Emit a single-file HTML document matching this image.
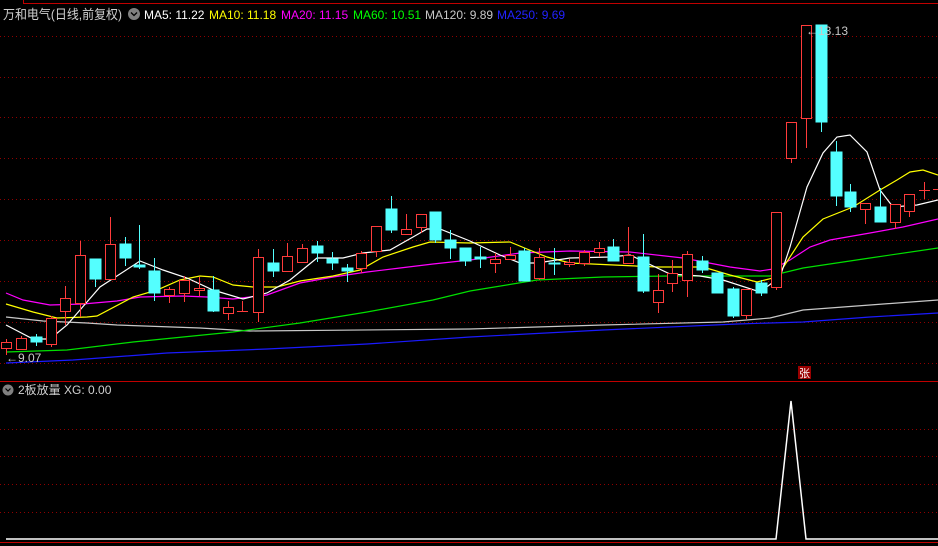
<!DOCTYPE html>
<html><head><meta charset="utf-8"><style>
html,body{margin:0;padding:0;background:#000;width:938px;height:546px;overflow:hidden}
svg{display:block}
text{font-family:"Liberation Sans","Noto Sans CJK SC",sans-serif}
</style></head><body>
<svg width="938" height="546" viewBox="0 0 938 546" xmlns="http://www.w3.org/2000/svg">
<rect width="938" height="546" fill="#000"/>
<path d="M23 3.5H938M23.5 0V3" stroke="#c00000" stroke-width="1"/>
<g stroke="#900000" stroke-width="1" stroke-dasharray="1,3">
<path d="M0 36.5H938M0 77.5H938M0 117.5H938M0 158.5H938M0 199.5H938M0 240.5H938M0 281.5H938M0 322.5H938M0 363.5H938"/>
<path d="M0 429.5H938M0 456.5H938M0 484.5H938M0 512.5H938"/>
</g>
<path d="M0 381.5H938M0 542.5H938" stroke="#c00000"/>
<text x="3" y="19" font-size="13" fill="#d0d0d0" textLength="119" lengthAdjust="spacingAndGlyphs">万和电气(日线,前复权)</text>
<circle cx="134" cy="14" r="6" fill="#808080"/><path d="M131 12.5l3 3 3-3" stroke="#000" fill="none" stroke-width="1.3"/>
<g font-size="12">
<text x="144" y="19" fill="#fff">MA5: 11.22</text>
<text x="209" y="19" fill="#ff0">MA10: 11.18</text>
<text x="281" y="19" fill="#f0f">MA20: 11.15</text>
<text x="353" y="19" fill="#0f0">MA60: 10.51</text>
<text x="425" y="19" fill="#c8c8c8">MA120: 9.89</text>
<text x="497" y="19" fill="#22f">MA250: 9.69</text>
</g>
<g fill="none" stroke-width="1.2">
<polyline stroke="#1a1aff" points="6,363 73,360 167,353 267,349 367,344 470,337 603,330 737,324 803,322 870,317 938,313"/>
<polyline stroke="#c8c8c8" points="6,317 43,321 87,323 117,325 200,328 250,331 470,329 603,325 723,322 770,318 803,310 870,305 938,300"/>
<polyline stroke="#00e000" points="6,352 67,350 133,342 233,332 300,323 367,312 433,300 470,291 537,280 603,277 670,276 770,276 803,268 870,258 938,248"/>
<polyline stroke="#ff00ff" points="6,293 23,300 50,305 83,304 117,301 140,297 183,296 207,297 233,299 267,295 300,283 333,277 367,272 400,268 433,264 470,260 520,253 570,251 630,252 683,258 730,267 760,271 773,269 790,260 810,247 830,240 870,233 903,227 938,219"/>
<polyline stroke="#ffff00" points="6,304 33,312 57,318 87,317 97,316 133,297 157,290 180,280 200,276 213,277 233,285 253,287 277,287 300,281 333,276 360,270 383,257 413,247 430,242 470,243 510,242 527,249 547,257 570,263 657,267 703,267 730,275 757,282 777,277 803,237 823,219 853,207 880,190 897,180 910,172 923,170 938,175"/>
<polyline stroke="#ffffff" points="6,325 33,339 50,339 67,325 100,287 140,261 163,270 187,278 213,290 243,299 267,293 290,280 317,258 343,258 363,253 390,250 413,237 427,229 440,229 470,241 500,255 520,263 537,263 570,258 610,257 630,255 670,274 700,276 723,280 760,292 780,277 790,247 807,187 823,153 837,137 850,135 867,152 880,190 893,207 917,205 938,200"/>
</g>
<g stroke="#ff3b3b" stroke-width="1" fill="#000">
<path d="M6.5 339V355M21.5 336V349M51.5 316V347M65.5 286V325M80.5 241V317M110.5 217V279M169.5 287V303M184.5 276V302M199.5 277V296M228.5 301V320M242.5 301V311M258.5 249V322M287.5 243V271M302.5 244V262M361.5 251V273M376.5 226V257M406.5 214V235M421.5 214V233M495.5 253V273M510.5 247V260M539.5 248V280M569.5 259V267M584.5 250V266M599.5 242V257M628.5 227V263M658.5 274V313M672.5 260V292M687.5 251V297M746.5 289V319M776.5 212V290M791.5 122V163M806.5 25V148M865.5 203V224M895.5 204V229M909.5 194V217M924.5 182V199"/>
<rect x="1.5" y="342.5" width="10" height="6"/>
<rect x="16.5" y="338.5" width="10" height="11"/>
<rect x="46.5" y="318.5" width="10" height="26"/>
<rect x="60.5" y="298.5" width="10" height="13"/>
<rect x="75.5" y="255.5" width="10" height="48"/>
<rect x="105.5" y="244.5" width="10" height="35"/>
<rect x="164.5" y="289.5" width="10" height="6"/>
<rect x="179.5" y="280.5" width="10" height="13"/>
<rect x="194.5" y="288.5" width="10" height="2"/>
<rect x="223.5" y="307.5" width="10" height="6"/>
<path d="M237 311.5H248"/>
<rect x="253.5" y="257.5" width="10" height="55"/>
<rect x="282.5" y="256.5" width="10" height="15"/>
<rect x="297.5" y="248.5" width="10" height="14"/>
<rect x="356.5" y="253.5" width="10" height="15"/>
<rect x="371.5" y="226.5" width="10" height="25"/>
<rect x="401.5" y="229.5" width="10" height="5"/>
<rect x="416.5" y="214.5" width="10" height="13"/>
<rect x="490.5" y="259.5" width="10" height="4"/>
<rect x="505.5" y="255.5" width="10" height="4"/>
<rect x="534.5" y="257.5" width="10" height="21"/>
<rect x="564.5" y="262.5" width="10" height="2"/>
<rect x="579.5" y="252.5" width="10" height="11"/>
<rect x="594.5" y="248.5" width="10" height="4"/>
<rect x="623.5" y="255.5" width="10" height="8"/>
<rect x="653.5" y="290.5" width="10" height="12"/>
<rect x="667.5" y="273.5" width="10" height="10"/>
<rect x="682.5" y="254.5" width="10" height="26"/>
<rect x="741.5" y="289.5" width="10" height="26"/>
<rect x="771.5" y="212.5" width="10" height="75"/>
<rect x="786.5" y="122.5" width="10" height="36"/>
<rect x="801.5" y="25.5" width="10" height="93"/>
<rect x="860.5" y="203.5" width="10" height="6"/>
<rect x="890.5" y="204.5" width="10" height="18"/>
<rect x="904.5" y="194.5" width="10" height="17"/>
<path d="M919 190.5H930M933 189.5H938"/>
</g>
<g stroke="#54ffff" fill="#54ffff">
<path d="M36.5 334V346M95.5 259V287M125.5 237V266M139.5 225V269M154.5 258V301M213.5 276V312M273.5 249V277M317.5 241V262M332.5 252V270M347.5 264V282M391.5 196V233M435.5 212V243M450.5 230V259M465.5 248V266M480.5 247V268M524.5 248V281M554.5 248V275M613.5 239V261M643.5 234V293M702.5 256V273M717.5 273V293M733.5 287V318M761.5 280V296M821.5 25V132M836.5 141V206M850.5 184V212M880.5 188V222" fill="none"/>
<rect x="31" y="337" width="11" height="5"/>
<rect x="90" y="259" width="11" height="20"/>
<rect x="120" y="244" width="11" height="14"/>
<rect x="134" y="265" width="11" height="2"/>
<rect x="149" y="271" width="11" height="22"/>
<rect x="208" y="290" width="11" height="21"/>
<rect x="268" y="263" width="11" height="8"/>
<rect x="312" y="246" width="11" height="7"/>
<rect x="327" y="259" width="11" height="4"/>
<rect x="342" y="268" width="11" height="3"/>
<rect x="386" y="209" width="11" height="21"/>
<rect x="430" y="212" width="11" height="28"/>
<rect x="445" y="240" width="11" height="8"/>
<rect x="460" y="248" width="11" height="13"/>
<rect x="475" y="257" width="11" height="2"/>
<rect x="519" y="251" width="11" height="30"/>
<rect x="549" y="263" width="11" height="1"/>
<rect x="608" y="247" width="11" height="14"/>
<rect x="638" y="257" width="11" height="34"/>
<rect x="697" y="261" width="11" height="9"/>
<rect x="712" y="273" width="11" height="20"/>
<rect x="728" y="289" width="11" height="27"/>
<rect x="756" y="283" width="11" height="10"/>
<rect x="816" y="25" width="11" height="97"/>
<rect x="831" y="152" width="11" height="44"/>
<rect x="845" y="192" width="11" height="15"/>
<rect x="875" y="207" width="11" height="15"/>
</g>
<text x="6" y="362" font-size="12" fill="#c8c8c8">←9.07</text>
<text x="806" y="35" font-size="12" fill="#c8c8c8">←13.13</text>
<rect x="798" y="366" width="13" height="13" fill="#9a0000"/>
<text x="799" y="377" font-size="11" fill="#fff">张</text>
<circle cx="8" cy="390" r="5.5" fill="#808080"/><path d="M5.5 388.5l2.5 2.5 2.5-2.5" stroke="#000" fill="none" stroke-width="1.2"/>
<text x="18" y="394" font-size="12" fill="#d0d0d0">2板放量 XG: 0.00</text>
<polyline fill="none" stroke="#fff" stroke-width="1.5" points="6,539 776,539 791,401 806,539 938,539"/>
</svg>
</body></html>
